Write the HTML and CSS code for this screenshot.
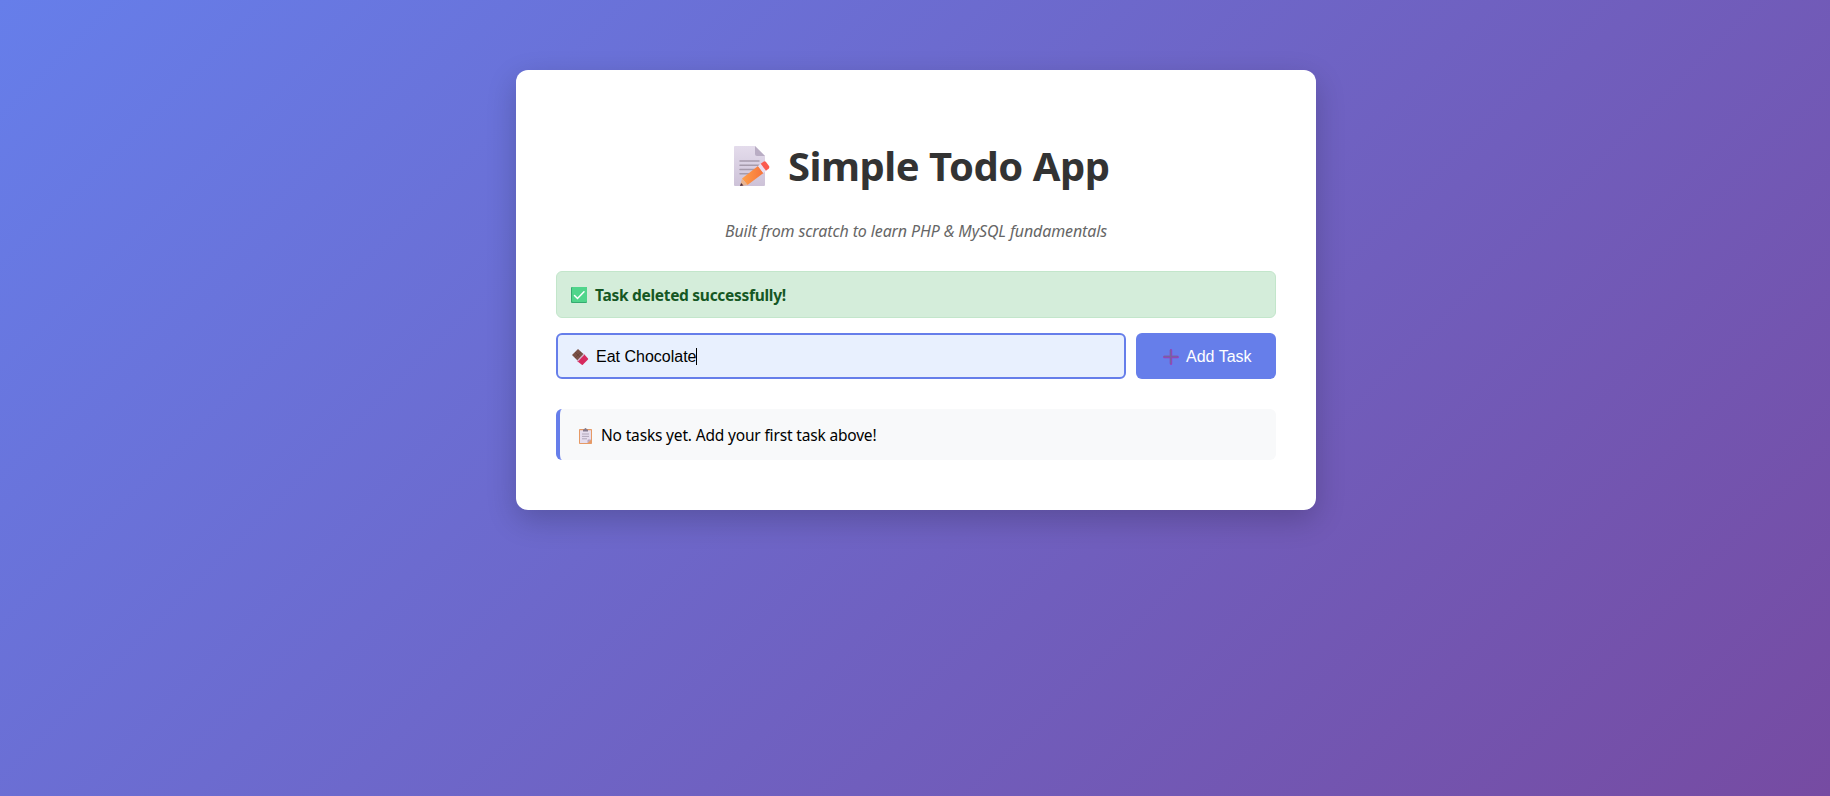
FILE: index.html
```
<!DOCTYPE html>
<html lang="en">
<head>
<meta charset="utf-8">
<title>Simple Todo App</title>
<link rel="stylesheet" href="styles.css">
</head>
<body>
<main class="card">
  <h1 class="title">
    <svg class="title-icon" viewBox="0 0 36 40">
      <defs>
        <linearGradient id="paper" x1="0" y1="0" x2="0" y2="1"><stop offset="0" stop-color="#e4dcec"/><stop offset="1" stop-color="#cdc2d8"/></linearGradient>
        <linearGradient id="pencil" x1="0" y1="0" x2="1" y2="0"><stop offset="0" stop-color="#ffa04b"/><stop offset="1" stop-color="#f6733a"/></linearGradient>
      </defs>
      <path fill="url(#paper)" d="M1 0H21L31 10V39Q31 40 30 40H1Q0 40 0 39V1Q0 0 1 0Z"/>
      <path fill="#b9adc4" d="M21 0L31 10H23Q21 10 21 8Z"/>
      <path stroke="#a69bac" stroke-width="1.5" stroke-linecap="round" d="M6 15H25M6 19.300H25M6 23.500H21M6 27.700H17"/>
      <path fill="url(#pencil)" d="M8 32.500L24 20L29.500 27L13.500 39Z"/>
      <path fill="#e9b38f" d="M8 32.500L13.500 39L6 40Z"/>
      <path fill="#4b3040" d="M7.100 37L9.500 39.500L6 40Z"/>
      <path fill="#eadff0" d="M24 20L27 17.600L32.300 24.700L29.200 27Z"/>
      <path fill="#fb5b50" d="M26.700 17.800L29.500 15.700Q31 14.700 32 16L35 20Q35.800 21.500 34.600 22.700L32 24.700Z"/>
    </svg>
    <span>Simple Todo App</span>
  </h1>
  <p class="subtitle">Built from scratch to learn PHP &amp; MySQL fundamentals</p>
  <div class="alert">
    <svg class="icon" viewBox="0 0 16 16">
      <rect width="16" height="16" rx="1" fill="#35aa70"/><rect x="1" width="15" height="15" rx="1" fill="#50d58b"/>
      <path d="M3.500 8.500L6.500 11.500L13 4.700" fill="none" stroke="#fff" stroke-width="1.500" stroke-linecap="round"/>
    </svg>
    <span>Task deleted successfully!</span>
  </div>
  <div class="form">
    <div class="field">
      <svg class="icon" viewBox="0 0 16 16">
        <path fill="#795046" d="M6 0L12 5.500L6 12L0 6Z"/>
        <path stroke="#5c3a33" stroke-width=".5" d="M3 3L9 9M9 3L3 9"/>
        <path fill="#d62a5f" d="M12 5L16 9.500Q16.400 10 16 10.500L10.800 15.800Q10.300 16.300 9.800 15.800L5 12Z"/>
        <path stroke="#d5b3cc" stroke-width="1.300" d="M12.200 5L5.300 12.200"/>
      </svg>
      <span class="value">Eat Chocolate</span><i class="caret"></i>
    </div>
    <button class="add" type="button">
      <svg class="icon" viewBox="0 0 16 16">
        <path stroke="#9b3fc0" stroke-width="2.400" stroke-linecap="round" d="M8 1.300V14.700M1.300 8H14.700"/>
        <path stroke="#75649f" stroke-width="1.500" stroke-linecap="round" d="M7.600 1.300V14.300M1.300 7.500H14.300"/>
      </svg>
      <span>Add Task</span>
    </button>
  </div>
  <div class="empty">
    <svg class="icon clip" viewBox="0 0 14 16">
      <rect y="1" width="13" height="15" rx=".8" fill="#e69a66"/>
      <path fill="#e6deee" d="M1 2.200H12V11.500L8.500 15H1Z"/><path fill="#b8a3bd" d="M12 11.500L8.500 15V12.500Q8.500 11.500 9.500 11.500Z"/>
      <path fill="#83798b" d="M4 3.500V1.500H5.200Q5.400 0 6.500 0T7.800 1.500H9V3.500Z"/>
      <path stroke="#aaa0b3" stroke-width=".9" d="M3 6H10M3 8.400H10M3 10.800H8"/>
    </svg>
    <span>No tasks yet. Add your first task above!</span>
  </div>
</main>
</body>
</html>
```
FILE: styles.css
```
* { box-sizing: border-box; }
body {
  margin: 0;
  min-height: 100vh;
  padding-top: 70px;
  background: linear-gradient(135deg, #667eea 0%, #764ba2 100%);
  font: 16px/21px "Noto Sans", "Open Sans", sans-serif;
  color: #000;
}
.card {
  width: 800px;
  height: 440px;
  margin: 0 auto;
  position: relative;
  left: 1px;
  padding: 66px 40px 40px;
  background: #fff;
  border-radius: 12px;
  box-shadow: 0 10px 30px rgba(0, 0, 0, .2);
}
span { white-space: nowrap; }
svg { flex: none; display: block; overflow: visible; }
.title {
  display: flex;
  align-items: center;
  height: 60px;
  margin: 0;
  padding-left: 178px;
  font-size: 40px;
  line-height: 60px;
  letter-spacing: -.48px;
  color: #333;
}
.title-icon { width: 36px; height: 40px; margin-right: 18px; }
.subtitle {
  height: 21px;
  margin: 25px 0 29px;
  text-align: center;
  font-style: italic;
  letter-spacing: -.13px;
  color: #666;
}
.icon { width: 16px; height: 16px; }
.alert {
  display: flex;
  align-items: center;
  height: 47px;
  padding: 1px 0 0 14px;
  gap: 8px;
  border: 1px solid #c3e6cb;
  border-radius: 6px;
  background: #d4edda;
  color: #155724;
  font-size: 15.5px;
  font-weight: 700;
  letter-spacing: -.29px;
}
.form { display: flex; gap: 10px; margin: 15px 0 30px; }
.field, .add {
  display: flex;
  align-items: center;
  height: 46px;
  border-radius: 6px;
  font: 16px/18px "Liberation Sans", Arial, sans-serif;
}
.field {
  flex: 1;
  padding: 1px 0 0 14px;
  border: 2px solid #667eea;
  background: #e8f0fe;
}
.value { margin-left: 8px; }
.caret { width: 1px; height: 17px; margin-left: -1px; background: #000; }
.add {
  width: 140px;
  padding: 2px 0 0 27px;
  gap: 7px;
  border: 0;
  background: #667eea;
  color: #fff;
}
.empty {
  display: flex;
  align-items: center;
  height: 51px;
  padding: 2px 0 0 19px;
  gap: 8px;
  border-left: 4px solid #667eea;
  border-radius: 6px;
  background: #f8f9fa;
  font-size: 15.5px;
  letter-spacing: -.17px;
}
.clip { width: 14px; }
```
